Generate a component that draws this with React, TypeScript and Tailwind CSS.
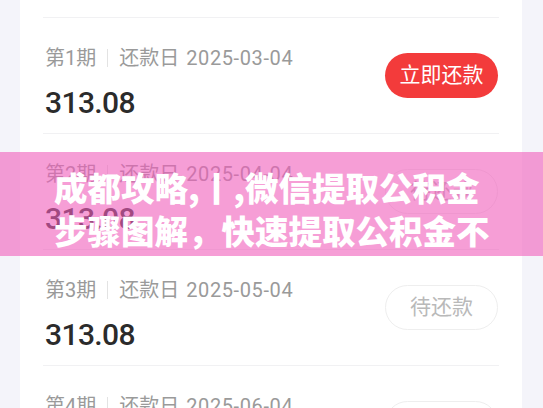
import React from "react";

const rows = [
  { n: 1, date: "2025-03-04", amount: "313.08", pay: true },
  { n: 2, date: "2025-04-04", amount: "313.08", pay: false },
  { n: 3, date: "2025-05-04", amount: "313.08", pay: false },
  { n: 4, date: "2025-06-04", amount: "313.08", pay: false },
];

function Row({ n, date, amount, pay }: { n: number; date: string; amount: string; pay: boolean }) {
  return (
    <div className="flex h-[116px] justify-between border-b border-[#f1f1f3]">
      <div className="self-start pt-[26px] pl-[2px]">
        <div className="flex items-center text-[20px] leading-[28px] text-[#9a9a9a]">
          <span>第{n}期</span>
          <span className="mx-[11px] h-[18px] w-px bg-[#e3e3e3]" />
          <span>还款日</span>
          <span className="ml-[7px] tracking-[0.6px]">{date}</span>
        </div>
        <div className="mt-[13px] text-[30px] font-medium leading-[36px] tracking-[-0.6px] text-[#2b2b2b]">{amount}</div>
      </div>
      <div
        className={
          pay
            ? "mr-[1px] flex h-[45px] w-[113px] items-center justify-center self-center rounded-full bg-[#f33b3b] text-[21px] text-white"
            : "mr-[1px] flex h-[45px] w-[113px] items-center justify-center self-center rounded-full border border-[#eeeeee] bg-white text-[21px] text-[#b9b9b9]"
        }
      >
        {pay ? "立即还款" : "待还款"}
      </div>
    </div>
  );
}

export default function App() {
  return (
    <div
      className="relative h-[408px] w-[543px] overflow-hidden bg-[#f4f4fa]"
      style={{ fontFamily: "Roboto, 'Noto Sans CJK SC', sans-serif" }}
    >
      <div className="ml-[20px] h-full w-[502px] bg-white px-[23px]">
        <div className="h-[18px] border-b border-[#f1f1f3]" />
        {rows.map((r) => (
          <Row key={r.n} {...r} />
        ))}
      </div>
      <div
        className="absolute left-0 right-0 top-[152px] h-[104px] bg-[rgba(240,94,186,0.6)] pl-[54px] pt-[13px] text-[33.5px] font-black leading-[43px] text-white"
        style={{ fontFamily: "'Noto Sans CJK SC', sans-serif" }}
      >
        <div className="whitespace-nowrap">成都攻略,丨,微信提取公积金</div>
        <div className="whitespace-nowrap">步骤图解，快速提取公积金不</div>
      </div>
    </div>
  );
}
